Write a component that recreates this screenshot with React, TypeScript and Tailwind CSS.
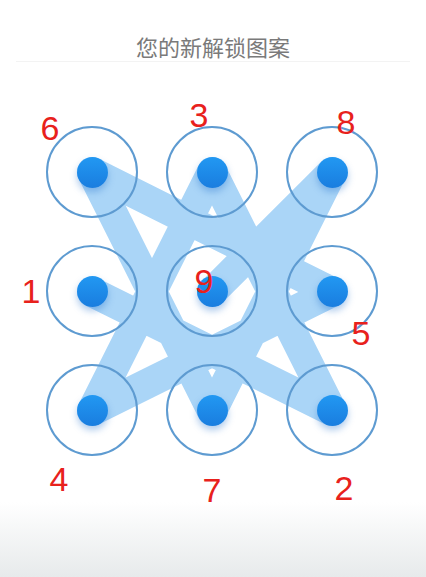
import React from 'react';

// pattern node centres, in the pattern box's own coordinates
const NODES = [
	{ x: 92, y: 46 },
	{ x: 212, y: 46 },
	{ x: 332, y: 46 },
	{ x: 92, y: 166 },
	{ x: 212, y: 166 },
	{ x: 332, y: 166 },
	{ x: 92, y: 285 },
	{ x: 212, y: 285 },
	{ x: 332, y: 285 },
];

// order the pattern was drawn in (node index)
const PATH = [3, 8, 1, 6, 5, 0, 7, 2, 4];

// red step numbers written over each node
const LABELS = [
	{ n: '6', x: 50, y: 128 },
	{ n: '3', x: 199, y: 115 },
	{ n: '8', x: 346, y: 122 },
	{ n: '1', x: 31, y: 291 },
	{ n: '9', x: 204, y: 281 },
	{ n: '5', x: 361, y: 333 },
	{ n: '4', x: 59, y: 479 },
	{ n: '7', x: 212, y: 490 },
	{ n: '2', x: 344, y: 488 },
];

function PatternNode() {
	return (
		<div className="w-[92px] h-[92px] rounded-full border-2 border-[#5e9bd1] flex items-center justify-center">
			<div className="w-[31px] h-[31px] rounded-full bg-linear-to-b from-[#2298f2] to-[#1a7ddf] shadow-[0_4px_7px_rgba(25,105,200,0.35)]" />
		</div>
	);
}

export default function App() {
	const points = PATH.map((i) => `${NODES[i].x},${NODES[i].y}`).join(' ');
	return (
		<div
			className="relative w-[426px] h-[577px] overflow-hidden bg-linear-to-b from-white from-[87%] to-[#e7eaeb]"
			style={{ fontFamily: '"Noto Sans CJK SC", "Noto Sans", sans-serif' }}
		>
			<div className="mx-4 h-[62px] pt-[30px] flex items-center justify-center border-b border-[#f3f3f3]">
				<span className="text-[22px] leading-none text-[#7a7a7a]">您的新解锁图案</span>
			</div>

			<div className="relative mt-[64px]">
				<svg className="absolute inset-0" width="426" height="331" viewBox="0 0 426 331">
					<polyline
						points={points}
						fill="none"
						stroke="#aad5f7"
						strokeWidth="30"
						strokeLinejoin="round"
						strokeLinecap="round"
					/>
				</svg>
				<div className="relative ml-[46px] grid grid-cols-[repeat(3,92px)] gap-x-[28px] gap-y-[27px]">
					{NODES.map((_, index) => (
						// eslint-disable-next-line react/no-array-index-key
						<PatternNode key={index} />
					))}
				</div>
			</div>

			{LABELS.map((l) => (
				<span
					key={l.n}
					className="absolute -translate-x-1/2 -translate-y-1/2 text-[34px] leading-none text-[#e8211c]"
					style={{ left: l.x, top: l.y, fontFamily: '"Liberation Sans", Arial, sans-serif' }}
				>
					{l.n}
				</span>
			))}
		</div>
	);
}
